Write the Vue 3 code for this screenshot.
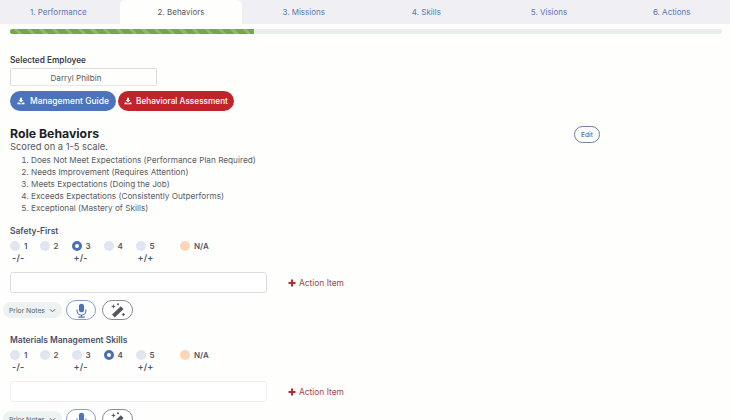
<script setup>
const tabs = ['1. Performance', '2. Behaviors', '3. Missions', '4. Skills', '5. Visions', '6. Actions']
const scale = [
  'Does Not Meet Expectations (Performance Plan Required)',
  'Needs Improvement (Requires Attention)',
  'Meets Expectations (Doing the Job)',
  'Exceeds Expectations (Consistently Outperforms)',
  'Exceptional (Mastery of Skills)'
]
const options = [
  { v: '1', sub: '-/-' },
  { v: '2', sub: '' },
  { v: '3', sub: '+/-' },
  { v: '4', sub: '' },
  { v: '5', sub: '+/+' }
]
const behaviors = [
  { name: 'Safety-First', selected: '3', faded: false },
  { name: 'Materials Management Skills', selected: '4', faded: true }
]
</script>

<template>
  <div class="page">
    <nav class="tabs">
      <div v-for="(t, i) in tabs" :key="t" class="tab" :class="{ active: i === 1 }">{{ t }}</div>
    </nav>
    <div class="progress"><div class="progress-fill"></div></div>

    <main class="content">
      <div class="field-label">Selected Employee</div>
      <div class="employee">Darryl Philbin</div>
      <div class="downloads">
        <button class="pill blue">
          <svg class="dl" viewBox="0 0 12 12"><path d="M4.4 1h3.2v3.6h2.2L6 8.2 2.2 4.6h2.2zM.8 8.2h2.8L5 9.6h2l1.4-1.4h2.8V11H.8z" fill="#fff"/></svg>
          Management Guide
        </button>
        <button class="pill red">
          <svg class="dl" viewBox="0 0 12 12"><path d="M4.4 1h3.2v3.6h2.2L6 8.2 2.2 4.6h2.2zM.8 8.2h2.8L5 9.6h2l1.4-1.4h2.8V11H.8z" fill="#fff"/></svg>
          Behavioral Assessment
        </button>
      </div>

      <div class="role-head">
        <div>
          <h2>Role Behaviors</h2>
          <div class="scored">Scored on a 1-5 scale.</div>
        </div>
        <button class="edit">Edit</button>
      </div>
      <ol class="scale">
        <li v-for="s in scale" :key="s">{{ s }}</li>
      </ol>

      <section v-for="b in behaviors" :key="b.name" class="behavior">
        <div class="b-name">{{ b.name }}</div>
        <div class="radios">
          <div v-for="o in options" :key="o.v" class="radio-col">
            <div class="radio-line">
              <span class="dot" :class="{ on: o.v === b.selected }"></span>
              <span class="num">{{ o.v }}</span>
            </div>
            <div class="sub">{{ o.sub }}</div>
          </div>
          <div class="radio-line na">
            <span class="dot peach"></span>
            <span class="num">N/A</span>
          </div>
        </div>
        <div class="note-row">
          <div class="note" :class="{ faded: b.faded }"></div>
          <div class="action">
            <svg class="plus" viewBox="0 0 8 8"><path d="M3 .5h2V3h2.5v2H5v2.5H3V5H.5V3H3z" fill="#c0272d"/></svg>
            Action Item
          </div>
        </div>
        <div class="tools">
          <div class="prior">
            Prior Notes
            <svg class="chev" viewBox="0 0 8 5"><path d="M1 1l3 3 3-3" fill="none" stroke="#555" stroke-width="1"/></svg>
          </div>
          <button class="tool mic">
            <svg viewBox="0 0 12 16" class="tool-ic"><rect x="3.2" y=".5" width="5.6" height="9.5" rx="2.8" fill="#4f72b8"/><path d="M1.2 7v1.4a4.8 4.8 0 0 0 9.6 0V7M6 13.2v1.6M2.5 15.2h7" fill="none" stroke="#4f72b8" stroke-width="1.2"/></svg>
          </button>
          <button class="tool wand">
            <svg viewBox="0 0 16 15" class="tool-ic wide"><path d="M2 11.6l8.8-8.4 2.8 2.8-8.8 8.4z" fill="#55565c"/><path d="M3.4 1.6v3.6M1.6 3.4h3.6M13.4 10v3.2M11.8 11.6H15M8 .3v2M7 1.3h2" stroke="#55565c" stroke-width="1" fill="none"/></svg>
          </button>
        </div>
      </section>
    </main>
  </div>
</template>

<style>
html, body { margin: 0; padding: 0; background: #fefefd; overflow: hidden; }
</style>

<style scoped>
.page { width: 730px; height: 420px; overflow: hidden; font-family: "Inter", "Open Sans", sans-serif; color: #4a4d55; background: #fefefd; }
.tabs { display: flex; width: 736px; height: 24px; margin-left: -3px; background: #f0f0f4; }
.tab { flex: 1; display: flex; align-items: center; justify-content: center; font-size: 8px; color: #5b78ae; }
.tab.active { background: #fefefd; color: #555a66; border-radius: 5px 5px 0 0; }
.progress { height: 5px; margin: 5px 8px 0 10px; background: #e9eded; border-radius: 3px; overflow: hidden; }
.progress-fill { width: 244px; height: 100%; background: repeating-linear-gradient(45deg, #76a744 0 6px, #8fb968 6px 9px); }
.content { padding: 20px 10px 0; }
.field-label { font-size: 8.24px; font-weight: 600; color: #3c3f47; line-height: 12px; }
.employee { width: 147px; height: 18px; box-sizing: border-box; margin-top: 2px; border: 1px solid #dcdde0; border-bottom-color: #e8e8ea; border-radius: 2px; font-size: 8.07px; line-height: 18px; text-align: center; color: #555a66; padding-right: 15px; }
.downloads { display: flex; gap: 2px; margin-top: 5px; }
.pill { display: flex; align-items: center; justify-content: flex-start; gap: 5px; height: 20px; border: 0; border-radius: 10px; color: #fff; font: 500 8.45px "Inter", sans-serif; padding: 0 0 0 7px; white-space: nowrap; }
.pill.blue { background: #4c74bc; width: 106px; }
.pill.red { background: #c0242b; width: 116px; gap: 4px; padding-left: 6px; font-size: 8.24px; }
.dl { width: 8px; height: 8px; flex: none; }
.role-head { display: flex; justify-content: space-between; margin-top: 15px; width: 590px; }
h2 { margin: 0; font-size: 12.27px; line-height: 15px; font-weight: 700; color: #1c1e26; }
.scored { font-size: 9.33px; line-height: 11px; color: #55585f; }
.edit { width: 26px; height: 17px; padding: 0; background: transparent; border: 1px solid #6c7f9c; border-radius: 9px; font: 500 6.5px "Inter", sans-serif; color: #5c6a80; }
.scale { margin: 2px 0 0; padding: 0 0 0 21px; font-size: 8.21px; line-height: 12px; color: #5a5d64; }
.behavior { margin-top: 11px; }
.behavior + .behavior { margin-top: 14px; }
.b-name { font-size: 8.45px; font-weight: 600; line-height: 12px; color: #47506a; }
.radios { display: flex; align-items: flex-start; margin-top: 2px; height: 25px; }
.radio-col { width: 32px; flex: none; }
.radio-col:first-child { width: 29.5px; }
.radio-line { display: flex; align-items: center; gap: 4px; height: 14px; }
.dot { width: 10px; height: 10px; border-radius: 50%; background: #e1e5ef; flex: none; box-sizing: border-box; }
.dot.on { background: #fff; border: 3px solid #4a6fb5; }
.dot.peach { background: #fad6b8; }
.num { font-size: 8px; font-weight: 600; color: #50566a; width: 14px; }
.sub { font-size: 9px; font-weight: 600; letter-spacing: .2px; color: #50566a; margin: -1px 0 0 2px; line-height: 11px; height: 11px; }
.na { margin-left: 12.5px; }
.na .num { width: auto; }
.note-row { display: flex; align-items: center; margin-top: 8px; }
.note { width: 257px; height: 21px; box-sizing: border-box; border: 1px solid #dcdde2; border-radius: 3px; background: #fff; flex: none; }
.note.faded { border-color: #eeeff2; }
.action { display: flex; align-items: center; gap: 3px; margin-left: 21px; font-size: 8.39px; color: #a8434c; }
.plus { width: 8px; height: 8px; }
.tools { display: flex; align-items: center; gap: 4px; height: 20px; margin: 7px 0 0 -7px; }
.prior { display: flex; align-items: center; gap: 4px; height: 16px; padding: 0 8px 0 6px; width: 59px; box-sizing: border-box; background: #edf3f2; border-radius: 8px; font-size: 6.78px; color: #555a60; white-space: nowrap; }
.chev { width: 7px; height: 5px; flex: none; margin-left: auto; }
.tool { display: flex; align-items: center; justify-content: center; height: 20px; box-sizing: border-box; padding: 0; background: #fff; border-radius: 10px; }
.tool.mic { width: 30px; border: 1px solid #86a0d2; }
.tool.wand { width: 31px; margin-left: 2px; border: 1px solid #8a8a90; }
.tool-ic { width: 11px; height: 15px; }
.tool-ic.wide { width: 16px; height: 15px; }
</style>
